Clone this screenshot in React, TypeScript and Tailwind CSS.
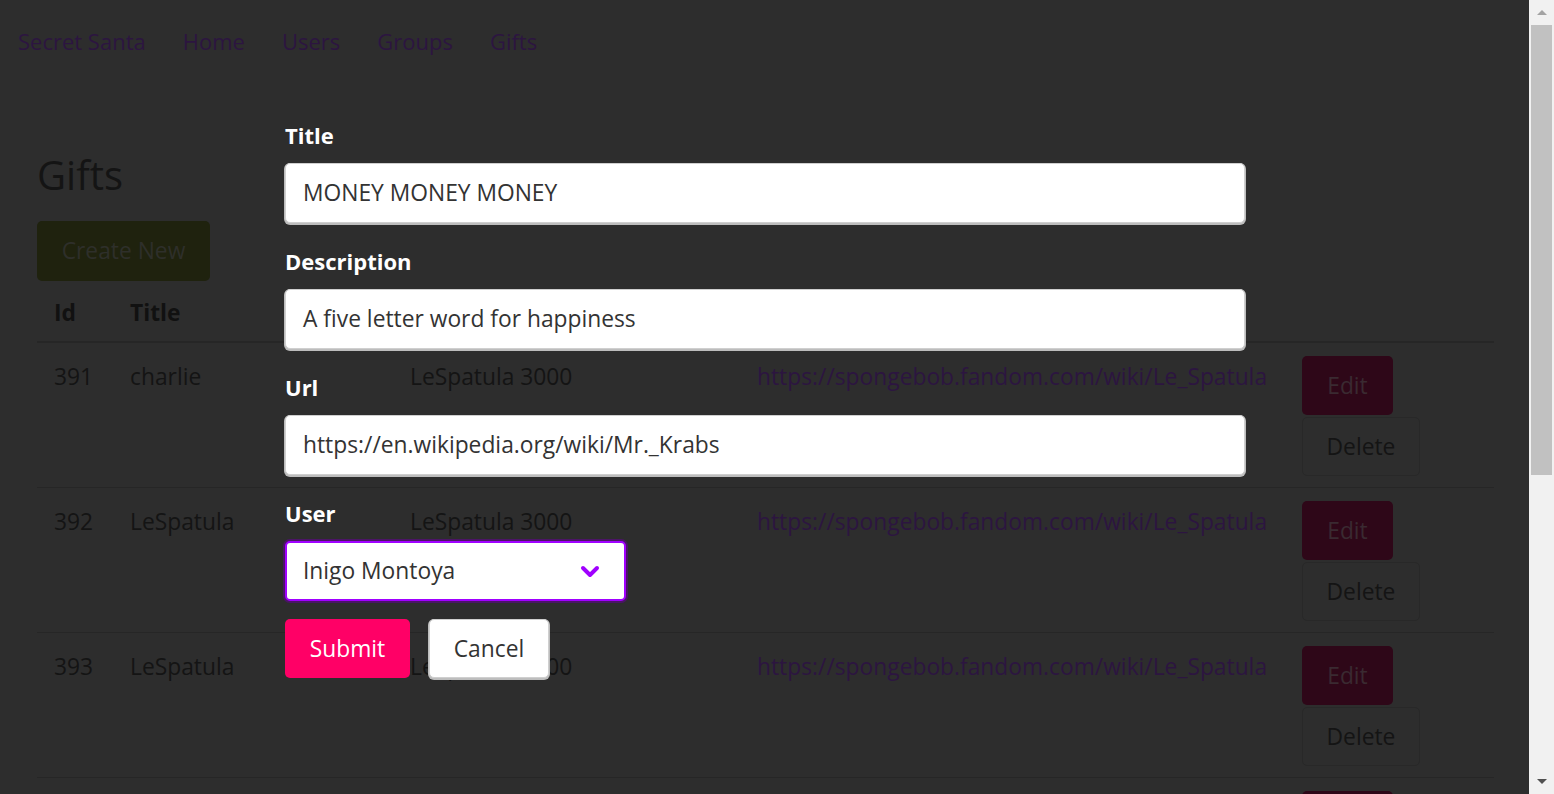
const navLinks = ["Secret Santa", "Home", "Users", "Groups", "Gifts"];

const gifts = [
  { id: 391, title: "charlie" },
  { id: 392, title: "LeSpatula" },
  { id: 393, title: "LeSpatula" },
  { id: 394, title: "LeSpatula" },
];

const cols = "grid grid-cols-[76px_280px_347px_545px_1fr]";

const GiftRow = ({ id, title }: { id: number; title: string }) => (
  <div className={`${cols} h-[145px] border-b border-[#262626] text-[#141414]`}>
    <div className="pl-[17px] pt-[19px]">{id}</div>
    <div className="pl-[17px] pt-[19px]">{title}</div>
    <div className="pl-[17px] pt-[19px]">LeSpatula 3000</div>
    <div className="pl-[17px] pt-[19px] text-[#2c1540]">https://spongebob.fandom.com/wiki/Le_Spatula</div>
    <div className="flex flex-col items-start gap-[2px] pl-[17px] pt-[13px]">
      <button className="h-[59px] w-[91px] rounded-[5px] bg-[#2e0718] text-[#3a2a31]">Edit</button>
      <button className="h-[59px] w-[118px] rounded-[5px] border border-[#282828] text-[#141414]">Delete</button>
    </div>
  </div>
);

const Field = ({ label, value }: { label: string; value: string }) => (
  <div className="flex flex-col gap-[13px]">
    <label className="h-[30px] text-[22px] font-bold leading-[30px] text-white">{label}</label>
    <div className="flex h-[60px] items-center rounded-[5px] border border-[#cfcfcf] bg-white px-[17px] text-[#333] shadow-[0_1px_0_1px_#bdbdbd]">
      {value}
    </div>
  </div>
);

const Scrollbar = () => (
  <div className="flex h-full w-[25px] shrink-0 flex-col items-center bg-[#f1f1f1]">
    <div className="flex h-[25px] items-center justify-center">
      <div className="h-0 w-0 border-x-[5px] border-b-[5px] border-x-transparent border-b-[#a3a3a3]" />
    </div>
    <div className="h-[450px] w-[21px] bg-[#c1c1c1]" />
    <div className="flex-1" />
    <div className="flex h-[25px] items-center justify-center">
      <div className="h-0 w-0 border-x-[5px] border-t-[5px] border-x-transparent border-t-[#505050]" />
    </div>
  </div>
);

export default function App() {
  return (
    <div className="flex h-screen w-full overflow-hidden bg-[#2d2d2d] font-['Open_Sans',sans-serif] text-[22.8px] leading-[30px]">
      <div className="relative min-w-0 flex-1">
        <nav className="flex h-[55px] gap-[37px] pl-[18px] pt-[26px] text-[22px] text-[#2c1540]">
          {navLinks.map((l) => (
            <a key={l}>{l}</a>
          ))}
        </nav>

        <main className="pl-[37px] pr-[35px]">
          <h1 className="mt-[97px] text-[40px] leading-[46px] text-[#141414]">Gifts</h1>
          <button className="mt-[23px] h-[60px] w-[173px] rounded-[5px] bg-[#1f220e] text-[#2e2f2a]">Create New</button>
          <div className={`${cols} h-[62px] items-center border-b-2 border-[#262626] pt-[4px] font-bold text-[#111]`}>
            <div className="pl-[17px]">Id</div>
            <div className="pl-[17px]">Title</div>
            <div className="pl-[17px]">Description</div>
            <div className="pl-[17px]">Url</div>
            <div />
          </div>
          {gifts.map((g) => (
            <GiftRow key={g.id} {...g} />
          ))}
        </main>

        <form className="absolute left-[285px] top-[120px] flex w-[960px] flex-col gap-[23px]">
          <Field label="Title" value="MONEY MONEY MONEY" />
          <Field label="Description" value="A five letter word for happiness" />
          <Field label="Url" value="https://en.wikipedia.org/wiki/Mr._Krabs" />
          <div className="flex flex-col gap-[13px]">
            <label className="h-[30px] text-[22px] font-bold leading-[30px] text-white">User</label>
            <div className="flex h-[60px] w-[341px] items-center justify-between rounded-[5px] border-2 border-[#a000ff] bg-white pl-[16px] pr-[24px] text-[#333] shadow-[0_0_0_2px_#4b1466]">
              <span>Inigo Montoya</span>
              <svg width="20" height="13" viewBox="0 0 20 13" fill="none">
                <polyline points="3,3 10,10 17,3" stroke="#a000ff" strokeWidth="4" strokeLinecap="round" strokeLinejoin="round" />
              </svg>
            </div>
          </div>
          <div className="-mt-[5px] flex gap-[19px]">
            <button type="button" className="h-[59px] w-[125px] rounded-[5px] bg-[#ff0066] text-white">Submit</button>
            <button type="button" className="h-[59px] w-[120px] rounded-[5px] border border-[#cfcfcf] bg-white text-[#333] shadow-[0_1px_0_1px_#bdbdbd]">Cancel</button>
          </div>
        </form>
      </div>
      <Scrollbar />
    </div>
  );
}
